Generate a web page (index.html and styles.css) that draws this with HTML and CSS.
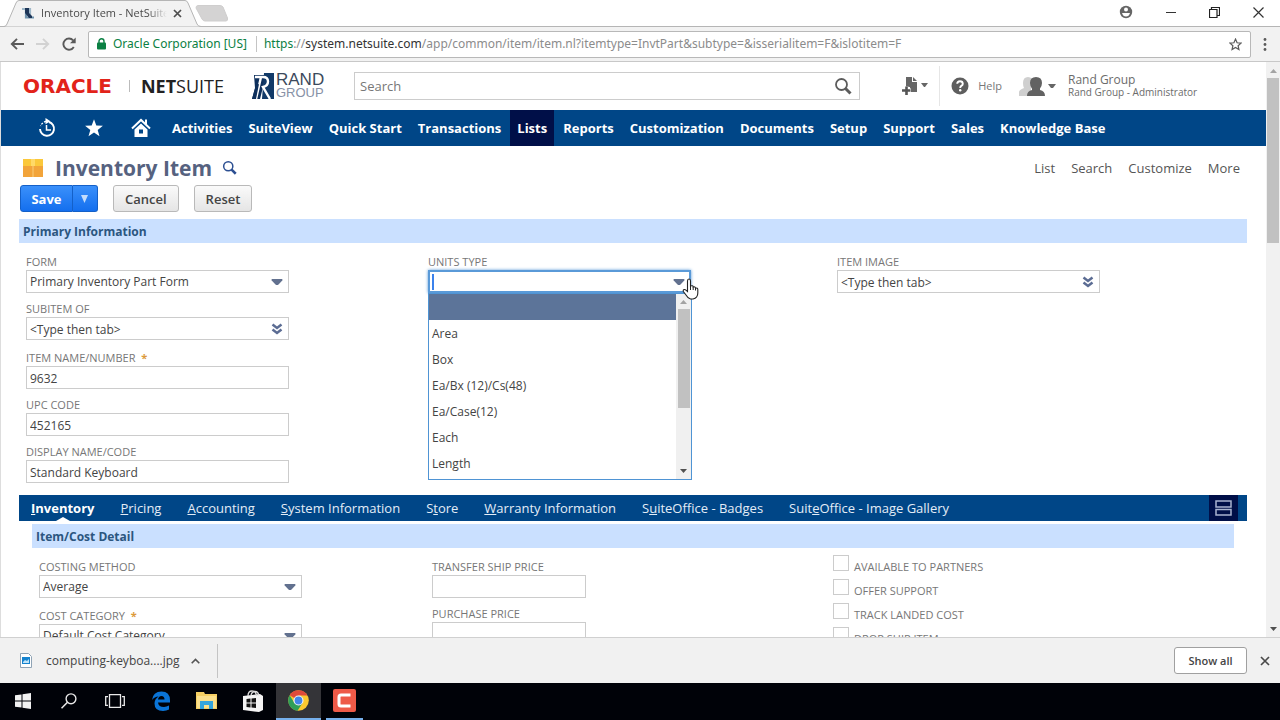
FILE: index.html
```html
<!DOCTYPE html>
<html lang="en">
<head>
<meta charset="utf-8">
<title>Inventory Item - NetSuite</title>
<link rel="stylesheet" href="styles.css">
</head>
<body>
<svg class="defs" aria-hidden="true">
  <symbol id="caret" viewBox="0 0 12 8"><path d="M1 1h10a1 1 0 0 1 .3 1.400L7 7H5L.7 2.400A1 1 0 0 1 1 1z" fill="#62718f"/></symbol>
  <symbol id="chevrons" viewBox="0 0 12 12"><path d="M1.500 1.500L6 5l4.500-3.500M1.500 6.500L6 10l4.500-3.500" fill="none" stroke="#5b6c93" stroke-width="2.500"/></symbol>
  <symbol id="lens" viewBox="0 0 18 18"><circle cx="7.500" cy="7.500" r="5.500" fill="none" stroke="currentColor" stroke-width="1.800"/><path d="M11.500 11.500l5 5" stroke="currentColor" stroke-width="3"/></symbol>
</svg>

<header class="tabstrip">
  <svg class="tab-shape" width="202" height="27" viewBox="0 0 202 27"><path d="M0 26.500H4Q6 26.500 7 24L16 3Q17 .500 19 .500H185Q187 .500 188 3L197 24Q198 26.500 201 26.500" fill="#f2f2f2" stroke="#b5b5b5"/></svg>
  <div class="tab">
    <svg width="14" height="12" viewBox="0 0 14 12"><path d="M1 2h8v8" fill="none" stroke="#9fb8c9" stroke-width="2.200"/><path d="M5 3v7.500h8" fill="none" stroke="#6f93ad" stroke-width="2.200"/><path d="M4 1h4v5l3 3v2H8L4 6z" fill="#1d3557"/></svg>
    <span class="tab-title">Inventory Item - NetSuite</span>
    <button class="plain" aria-label="Close tab"><svg width="9" height="9" viewBox="0 0 9 9"><path d="M1 1l7 7M8 1L1 8" stroke="#4d4d4d" stroke-width="1.700"/></svg></button>
  </div>
  <svg class="newtab" width="34" height="17" viewBox="0 0 34 17"><path d="M3 .500H25Q27 .500 28 2L32.500 13Q33 16 31 16H10Q8 16 7 14L1 3Q1 .500 3 .500z" fill="#d4d3d3" stroke="#cfcece"/></svg>
  <div class="win">
    <svg width="14" height="14" viewBox="0 0 14 14"><circle cx="7" cy="7" r="6.200" fill="#666"/><circle cx="7" cy="4.500" r="2" fill="#fff"/><path d="M3 8h8q-1 3.500-4 3.500T3 8z" fill="#fff"/></svg>
    <svg width="10" height="10" viewBox="0 0 10 10"><path d="M0 5.500h10" stroke="#333"/></svg>
    <svg width="11" height="11" viewBox="0 0 11 11"><path d="M.500 2.500h7.500v8H.500zM2.500 2.500v-2h8v8H8" fill="none" stroke="#222" stroke-width="1.200"/></svg>
    <svg width="11" height="11" viewBox="0 0 11 11"><path d="M.500 .500l10 10M10.500 .500l-10 10" stroke="#333" stroke-width="1.200"/></svg>
  </div>
</header>

<div class="toolbar">
  <svg width="14" height="12" viewBox="0 0 14 12"><path d="M14 6H2M7 .800L1.800 6 7 11.200" fill="none" stroke="#5a5a5a" stroke-width="1.900"/></svg>
  <svg width="14" height="12" viewBox="0 0 14 12"><path d="M0 6h12M7 .800L12.200 6 7 11.200" fill="none" stroke="#d2d2d2" stroke-width="1.900"/></svg>
  <svg width="14" height="14" viewBox="0 0 14 14"><path d="M11.800 10A5.600 5.600 0 1 1 11.200 3.400" fill="none" stroke="#5a5a5a" stroke-width="1.900"/><path d="M13.700 .500v5.700H8z" fill="#5a5a5a"/></svg>
  <div class="omnibox">
    <svg width="9" height="12" viewBox="0 0 9 12"><rect y="4.500" width="9" height="7" rx="1" fill="#0b8043"/><path d="M2 5V3.200a2.500 2.500 0 0 1 5 0V5" fill="none" stroke="#0b8043" stroke-width="1.400"/></svg>
    <span class="cert">Oracle Corporation [US]</span>
    <span class="url"><span class="scheme">https</span>://<b>system.netsuite.com</b>/app/common/item/item.nl?itemtype=InvtPart&amp;subtype=&amp;isserialitem=F&amp;islotitem=F</span>
    <svg width="13" height="13" viewBox="0 0 14 14"><path d="M7 1.200l1.700 3.900 4.300.400-3.200 2.800.900 4.200L7 10.300l-3.700 2.200.900-4.200L1 5.500l4.300-.400z" fill="none" stroke="#5a5a5a" stroke-width="1.300"/></svg>
  </div>
  <svg width="4" height="13" viewBox="0 0 4 13"><g fill="#5a5a5a"><circle cx="2" cy="1.500" r="1.400"/><circle cx="2" cy="6.500" r="1.400"/><circle cx="2" cy="11.500" r="1.400"/></g></svg>
</div>

<div class="viewport">
<main class="page">
  <div class="brandbar">
    <div class="oracle"><span class="oracle-name">ORACLE</span><span class="oracle-suite"><b>NET</b>SUITE</span></div>
    <div class="rand">
      <svg width="22" height="26" viewBox="0 0 22 26"><path d="M2 2h10v8L8 26H0l3-11z" fill="#0d2f5c"/><path d="M12 0h10v26H10z" fill="#123a68"/><path d="M3 4h8q5 0 5 4.500T11 14l7 12M9 4L4 26" fill="none" stroke="#fff" stroke-width="2.400"/><path d="M0 26L4 12l3-1-3 15z" fill="#0d2f5c"/></svg>
      <div class="rand-text"><span>RAND</span><span class="grp">GROUP</span></div>
    </div>
    <label class="search"><input type="text" placeholder="Search" aria-label="Search"><svg width="18" height="18"><use href="#lens"/></svg></label>
    <button class="plain create" aria-label="Create new"><svg width="26" height="19" viewBox="0 0 26 19"><path d="M4 0h6v5h5v10H8v-5H4z" fill="#666"/><path d="M11 0l4 4h-4z" fill="#666"/><path d="M0 13.500h9M4.500 9.500v8.500" stroke="#fff" stroke-width="4"/><path d="M0 13.500h8.500M4.500 9.500v8.500" stroke="#555" stroke-width="2.600"/><path d="M19 6h7l-3 4h-1z" fill="#666"/></svg></button>
    <a class="help" href="#"><svg width="18" height="18" viewBox="0 0 18 18"><circle cx="9" cy="9" r="8.500" fill="#5e5e5e"/><path d="M6.200 6.800Q6.300 4.200 9 4.200t2.800 2.500Q11.800 8 10.300 8.900 9.200 9.600 9.200 11" fill="none" stroke="#fff" stroke-width="1.900"/><circle cx="9.200" cy="13.300" r="1.200" fill="#fff"/></svg>Help</a>
    <button class="plain user"><svg width="37" height="21" viewBox="0 0 37 21"><path d="M9 1q5 0 5 6 0 4-2 6v3H0q0-2 5-4-1-2-1-5 0-6 5-6zM0 16h12v4H0z" fill="#cfcfcf"/><path d="M17 1q6 0 6 6 0 3-2 5.500v1.500q5 1 5 6H8q0-5 5-6v-1.500Q11 10 11 7q0-6 6-6z" fill="#626262"/><path d="M29 8h8l-3 4h-2z" fill="#666"/></svg><span class="who"><span>Rand Group</span><span class="role">Rand Group - Administrator</span></span></button>
  </div>

  <nav class="mainnav">
    <a href="#" class="ic" aria-label="Recent"><svg width="20" height="20" viewBox="0 0 20 20"><path d="M12 4A7 7 0 1 1 3 11" fill="none" stroke="#fff" stroke-width="1.900"/><path d="M9 3.400Q5 4.500 3.500 8" fill="none" stroke="#fff" stroke-width="1.300" stroke-dasharray="2 1.500"/><path d="M8.500 0l5 3.300-5 3z" fill="#fff"/><path d="M9.500 7v5H14" fill="none" stroke="#fff" stroke-width="1.500"/></svg></a>
    <a href="#" class="ic" aria-label="Shortcuts"><svg width="20" height="20" viewBox="0 0 20 20"><path d="M10 1.300l2.300 6.200 6.600.300-5.200 4.100 1.800 6.400-5.500-3.700-5.500 3.700 1.800-6.400L1.100 7.800l6.600-.300z" fill="#fff"/></svg></a>
    <a href="#" class="ic" aria-label="Home"><svg width="20" height="20" viewBox="0 0 20 20"><path d="M1 10.500L10 2l9 8.500M15 1.500V6" fill="none" stroke="#fff" stroke-width="2"/><path d="M10 5.500l6.500 6V19h-13v-7.500zM8 11.500v4h4v-4z" fill="#fff" fill-rule="evenodd"/></svg></a>
    <a href="#">Activities</a><a href="#">SuiteView</a><a href="#">Quick Start</a><a href="#">Transactions</a><a href="#" class="on">Lists</a><a href="#">Reports</a><a href="#">Customization</a><a href="#">Documents</a><a href="#">Setup</a><a href="#">Support</a><a href="#">Sales</a><a href="#">Knowledge Base</a>
  </nav>

  <div class="content">
    <div class="titlerow">
      <svg width="20" height="20" viewBox="0 0 20 20"><path d="M0 1h20v8H0z" fill="#fbc83b"/><path d="M0 8h20v11H0z" fill="#f2a43a"/><path d="M8 1h4v7H8z" fill="#ffd968"/><path d="M9 8h2v11H9z" fill="#f6b95a"/></svg>
      <h1>Inventory Item</h1>
      <svg class="title-lens" width="15" height="15"><use href="#lens" width="15" height="15"/></svg>
      <div class="links"><a href="#">List</a><a href="#">Search</a><a href="#">Customize</a><a href="#">More</a></div>
    </div>
    <div class="buttons">
      <div class="split"><button class="save">Save</button><button class="drop" aria-label="Save options"><svg width="9" height="8" viewBox="0 0 9 8"><path d="M1 0h7L4.500 8z" fill="#c3dcfc"/></svg></button></div>
      <button class="btn">Cancel</button>
      <button class="btn">Reset</button>
    </div>

    <h2 class="section">Primary Information</h2>
    <div class="fields primary">
      <div class="col">
        <div class="field"><label for="form">FORM</label><div class="box"><select id="form"><option>Primary Inventory Part Form</option></select><svg width="12" height="8"><use href="#caret"/></svg></div></div>
        <div class="field"><label for="sub">SUBITEM OF</label><div class="box"><input id="sub" type="text" value="&lt;Type then tab&gt;"><svg width="12" height="12"><use href="#chevrons"/></svg></div></div>
        <div class="field required"><label for="name">ITEM NAME/NUMBER <i>*</i></label><div class="box"><input id="name" type="text" value="9632"></div></div>
        <div class="field"><label for="upc">UPC CODE</label><div class="box"><input id="upc" type="text" value="452165"></div></div>
        <div class="field"><label for="disp">DISPLAY NAME/CODE</label><div class="box"><input id="disp" type="text" value="Standard Keyboard"></div></div>
      </div>
      <div class="col">
        <div class="field"><label for="units">UNITS TYPE</label><div class="box open"><input id="units" type="text" role="combobox" aria-expanded="true" aria-controls="unitlist"><svg width="12" height="8"><use href="#caret"/></svg>
          <div class="menu">
            <ul id="unitlist" role="listbox"><li role="option" class="sel" aria-selected="true"></li><li role="option">Area</li><li role="option">Box</li><li role="option">Ea/Bx (12)/Cs(48)</li><li role="option">Ea/Case(12)</li><li role="option">Each</li><li role="option">Length</li></ul>
            <div class="mbar"><svg width="7" height="4" viewBox="0 0 7 4"><path d="M0 4h7L3.500 0z" fill="#a3a3a3"/></svg><div class="mthumb"></div><svg class="dn" width="7" height="4" viewBox="0 0 7 4"><path d="M0 0h7L3.500 4z" fill="#505050"/></svg></div>
          </div>
          <svg class="hand" width="17" height="22" viewBox="0 0 17 22"><path d="M5.500 13.500V3q0-2 1.500-2t1.500 2v5q2.500-.800 2.700 1 2-.700 2.300 1 2.300-.300 2.300 1.500v3.500q0 5-4.800 6H8.500Q6 20.500 4 17L1.300 13.500q-.500-1.500.700-2 1-.300 2 .700z" fill="#fff" stroke="#222" stroke-width="1.100"/><path d="M8.500 8v4M11.200 9v3M13.500 10v2.500" stroke="#222"/></svg>
        </div></div>
      </div>
      <div class="col">
        <div class="field"><label for="img">ITEM IMAGE</label><div class="box"><input id="img" type="text" value="&lt;Type then tab&gt;"><svg width="12" height="12"><use href="#chevrons"/></svg></div></div>
      </div>
    </div>

    <div class="subtabs">
      <a href="#" class="on"><u>I</u>nventory</a><a href="#"><u>P</u>ricing</a><a href="#"><u>A</u>ccounting</a><a href="#"><u>S</u>ystem Information</a><a href="#">S<u>t</u>ore</a><a href="#"><u>W</u>arranty Information</a><a href="#">S<u>u</u>iteOffice - Badges</a><a href="#">Suit<u>e</u>Office - Image Gallery</a>
      <button class="layout" aria-label="Unlayer tabs"><svg width="17" height="16" viewBox="0 0 17 16"><path d="M1 1h15v6H1zM1 9.500h15v5.500H1z" fill="none" stroke="#a9b4d0" stroke-width="1.500"/></svg></button>
    </div>
    <div class="subpage">
      <h2 class="section">Item/Cost Detail</h2>
      <div class="fields detail">
        <div class="col">
          <div class="field"><label for="cm">COSTING METHOD</label><div class="box"><select id="cm"><option>Average</option></select><svg width="12" height="8"><use href="#caret"/></svg></div></div>
          <div class="field required"><label for="cc">COST CATEGORY <i>*</i></label><div class="box"><select id="cc"><option>Default Cost Category</option></select><svg width="12" height="8"><use href="#caret"/></svg></div></div>
        </div>
        <div class="col narrow">
          <div class="field"><label for="tsp">TRANSFER SHIP PRICE</label><div class="box"><input id="tsp" type="text"></div></div>
          <div class="field"><label for="pp">PURCHASE PRICE</label><div class="box"><input id="pp" type="text"></div></div>
        </div>
        <div class="checks">
          <label><input type="checkbox"><span>AVAILABLE TO PARTNERS</span></label>
          <label><input type="checkbox"><span>OFFER SUPPORT</span></label>
          <label><input type="checkbox"><span>TRACK LANDED COST</span></label>
          <label><input type="checkbox"><span>DROP SHIP ITEM</span></label>
        </div>
      </div>
    </div>
  </div>
</main>
<div class="scroll"><svg width="7" height="4" viewBox="0 0 7 4"><path d="M0 4h7L3.500 0z" fill="#a3a3a3"/></svg><div class="thumb"></div><svg class="dn" width="7" height="4" viewBox="0 0 7 4"><path d="M0 0h7L3.500 4z" fill="#505050"/></svg></div>
</div>

<div class="downloads">
  <svg width="12" height="15" viewBox="0 0 12 15"><path d="M.500 .500h8l3 3v11H.500z" fill="#fff" stroke="#8fa3b5"/><path d="M2 4h8v7H2z" fill="#1583cf"/><path d="M3 9l2-2 2 1 2-2v4H3z" fill="#bfe3f8"/></svg>
  <span class="file">computing-keyboa....jpg</span>
  <svg width="9" height="6" viewBox="0 0 9 6"><path d="M.700 5.300L4.500 1.500l3.800 3.800" fill="none" stroke="#555" stroke-width="1.600"/></svg>
  <span class="rule"></span>
  <button class="showall">Show all</button>
  <button class="plain" aria-label="Close downloads"><svg width="10" height="10" viewBox="0 0 10 10"><path d="M1 1l8 8M9 1L1 9" stroke="#4a4a4a" stroke-width="1.700"/></svg></button>
</div>

<footer class="taskbar">
  <button aria-label="Start"><svg width="16" height="16" viewBox="0 0 16 16"><path d="M0 2.300l6.500-.900v6.100H0zM7.500 1.200L16 0v7.500H7.500zM0 8.500h6.500v6.100L0 13.700zM7.500 8.500H16V16l-8.500-1.200z" fill="#f2f2f2"/></svg></button>
  <button aria-label="Search"><svg width="16" height="16" viewBox="0 0 16 16"><circle cx="10" cy="5.800" r="4.900" fill="none" stroke="#e8e8e8" stroke-width="1.400"/><path d="M6.500 9.300L.500 15.300" stroke="#e8e8e8" stroke-width="1.600"/></svg></button>
  <button aria-label="Task view"><svg width="20" height="14" viewBox="0 0 20 14"><path d="M4.500 .700h11v12.600h-11zM3 2.700H.700v8.600H3M17 2.700h2.300v8.600H17" fill="none" stroke="#e8e8e8" stroke-width="1.300"/></svg></button>
  <button aria-label="Edge"><svg width="20" height="20" viewBox="0 0 20 20"><path d="M1 9Q2 .500 10.500 .500 19 .500 19 9.500v2H7q.500 4.500 6 4.500 2.500 0 5-1.400v4Q15.500 20 12 20q-8.500 0-8.500-7.500Q3.500 8 7.500 5.500 3.500 5.700 1 9zM7 8.500h6.500Q13.500 5 10.500 5 7.500 5 7 8.500z" fill="#0a74d6" fill-rule="evenodd"/></svg></button>
  <button aria-label="File Explorer"><svg width="21" height="18" viewBox="0 0 21 18"><path d="M0 0h8l1 2h12v15H0z" fill="#f5cf63"/><path d="M1 4h19v12H1z" fill="#fbe08c"/><path d="M4 17V9h13v8h-4v-4H8v4z" fill="#35a5dc"/></svg></button>
  <button aria-label="Store"><svg width="20" height="22" viewBox="0 0 20 22"><path d="M0 6l17-2 3 2v14l-4 2L0 20z" fill="#f4f4f4"/><path d="M5 6Q5 1 9 1t4.500 5M8 5q1-3.500 4-3.500 3.500 0 3.500 4" fill="none" stroke="#ddd" stroke-width="1.300"/><path d="M3.500 9l4-.500v4h-4zM8.500 8.500L13 8v4.500H8.500zM3.500 13.500h4v4l-4-.500zM8.500 13.500H13V18l-4.500-.500z" fill="#111"/></svg></button>
  <button class="active" aria-label="Chrome"><svg width="21" height="21" viewBox="0 0 21 21"><circle cx="10.500" cy="10.500" r="10.300" fill="#fbc82f"/><path d="M10.500 10.500L1.600 5.300A10.300 10.300 0 0 1 19.500 5.500H10.500z" fill="#df4a3b"/><path d="M1.600 5.300A10.300 10.300 0 0 0 9.500 20.750L14.500 13 10.500 10.500 6.500 13z" fill="#2f9e58"/><circle cx="10.500" cy="10.500" r="5" fill="#f4f4f4"/><circle cx="10.500" cy="10.500" r="3.900" fill="#4285e8"/></svg></button>
  <button class="running" aria-label="Camtasia"><svg width="23" height="23" viewBox="0 0 23 23"><rect width="23" height="23" rx="2" fill="#ee5a48"/><path d="M17.500 6H8Q6 6 6 8v7q0 2 2 2h9.500" fill="none" stroke="#fff" stroke-width="3"/></svg></button>
</footer>
</body>
</html>
```
FILE: styles.css
```css
* { box-sizing: border-box; }
body { margin: 0; height: 100vh; display: flex; flex-direction: column; overflow: hidden; background: #fff; color: #555; font: 13px/18px "Open Sans", "Noto Sans", sans-serif; }
a { color: inherit; text-decoration: none; }
button, input, select { font: inherit; color: inherit; margin: 0; }
svg { flex: none; display: block; }
.defs { position: absolute; width: 0; height: 0; }
.plain { background: none; border: 0; padding: 0; display: flex; align-items: center; text-align: left; }

/* browser chrome */
.tabstrip { position: relative; flex: none; height: 27px; display: flex; align-items: center; border-bottom: 1px solid #b5b5b5; }
.tab-shape { position: absolute; left: 0; top: 0; }
.tab { position: relative; width: 182px; padding-left: 21px; display: flex; align-items: center; gap: 6px; font-size: 11px; color: #4a4a4a; }
.tab-title { flex: 1; overflow: hidden; white-space: nowrap; -webkit-mask-image: linear-gradient(90deg, #000 85%, transparent); mask-image: linear-gradient(90deg, #000 85%, transparent); }
.newtab { margin-left: 13px; }
.win { margin-left: auto; padding: 0 16px 2px 0; display: flex; align-items: center; gap: 33px; }
.toolbar { flex: none; height: 35px; display: flex; align-items: center; gap: 12px; padding: 0 13px 0 10px; background: #f2f2f2; border-bottom: 1px solid #c8c8c8; }
.omnibox { flex: 1; min-width: 0; height: 27px; display: flex; align-items: center; padding: 0 8px 0 8px; background: #fff; border: 1px solid #b8b8b8; border-radius: 2px; font: 12px/18px "Noto Sans", sans-serif; white-space: nowrap; }
.cert { margin-left: 7px; padding-right: 9px; border-right: 1px solid #c4c4c4; color: #0b8043; line-height: 16px; }
.url { flex: 1; padding-left: 7px; overflow: hidden; color: #8c8c8c; }
.url b { font-weight: 400; color: #333; }
.scheme { color: #0b8043; }

/* page frame */
.viewport { flex: 1; min-height: 0; display: flex; }
.page { flex: 1; min-width: 0; overflow: hidden; border-left: 1px solid #ddd; }
.scroll { width: 14px; display: flex; flex-direction: column; align-items: center; gap: 5px; padding: 7px 0 6px; background: #f1f1f1; }
.thumb { width: 12px; height: 165px; background: #c1c1c1; }
.dn { margin-top: auto; }

.brandbar { height: 48px; display: flex; align-items: center; padding: 0 24px 0 22px; }
.oracle { width: 201px; display: flex; align-items: center; color: #222; }
.oracle-name { width: 107px; font: bold 20px/12px "DejaVu Sans", sans-serif; color: #e2231a; border-right: 1px solid #bbb; }
.oracle-suite { padding-left: 11px; font-size: 18px; }
.rand { margin-left: 28px; display: flex; gap: 2px; }
.rand-text { width: 50px; display: flex; flex-direction: column; font: 17px/14px "Liberation Sans", sans-serif; color: #3c4a5c; }
.grp { font-size: 13px; line-height: 12px; color: #8791a6; }
.search { flex: 1; margin-left: 28px; height: 28px; display: flex; align-items: center; padding: 0 7px 0 5px; border: 1px solid #ccc; color: #5c5c5c; }
.search input { flex: 1; min-width: 0; border: 0; padding: 0; outline: 0; background: none; font-size: 13px; }
.search input::placeholder { color: #777; opacity: 1; }
.create { margin-left: 42px; height: 40px; width: 38px; border-right: 1px solid #e6e6e6; }
.help { margin-left: 11px; display: flex; align-items: center; gap: 9px; font-size: 11px; color: #777; }
.user { margin-left: 17px; gap: 12px; color: #6b6b6b; }
.who { width: 174px; display: flex; flex-direction: column; font-size: 12px; line-height: 12px; }
.role { font-size: 10px; }

.mainnav { height: 36px; display: flex; gap: 2px; padding-left: 23px; background: #004687; color: #fff; font-weight: 700; white-space: nowrap; }
.mainnav a { display: flex; align-items: center; padding: 0 7px; }
.mainnav .ic { width: 45px; justify-content: center; }
.mainnav .on { background: #000f48; }

/* record */
.content { padding: 7px 19px 0 18px; }
.titlerow { display: flex; align-items: center; height: 29px; padding: 0 7px 0 4px; }
h1 { margin: 0 0 0 12px; font-size: 21px; line-height: 28px; font-weight: 700; color: #56627f; }
.title-lens { margin-left: 10px; color: #2c4f92; }
.links { margin-left: auto; display: flex; gap: 16px; padding-top: 1px; color: #555; }
.buttons { display: flex; gap: 15px; margin: 3px 0 7px 1px; }
.btn, .save, .drop { height: 27px; border-radius: 3px; border: 1px solid #b9b9b9; font-weight: 600; }
.btn { padding: 0 11px; background: linear-gradient(#fafafa, #e5e5e5); color: #444; }
.split { display: flex; }
.save, .drop { color: #fff; background: linear-gradient(#3a90fb, #146fee); border-color: #1460c8; }
.save { width: 53px; padding: 0; border-radius: 3px 0 0 3px; font-weight: 700; }
.drop { width: 25px; padding: 0 7px; border-left: 0; border-radius: 0 3px 3px 0; }
.section { margin: 0; height: 24px; padding-left: 4px; background: #cae0ff; color: #2c5680; font-size: 12px; line-height: 25px; font-weight: 700; }
.fields { display: grid; padding-left: 7px; }
.primary { grid-template-columns: 402fr 409fr 410fr; padding-top: 11px; padding-bottom: 12px; }
.detail { grid-template-columns: 393fr 401fr 401fr; padding-top: 11px; }
.col { display: flex; flex-direction: column; gap: 8px; }
.field label { display: block; font-size: 11px; line-height: 16px; color: #777; }
.field.required { padding-top: 2px; }
.field label i { margin-left: 3px; font-style: normal; font-weight: 700; color: #dc9a3c; }
.box { position: relative; width: 263px; height: 23px; }
.narrow .box { width: 154px; }
.box > input, .box > select { width: 100%; height: 23px; display: block; padding: 1px 3px 0; border: 1px solid #ccc; border-radius: 0; background: #fff; color: #444; font-size: 12px; outline: 0; appearance: none; }
.box > svg { position: absolute; right: 6px; top: 50%; translate: 0 -50%; }
.box.open > input { border: 2px solid #5a9ad8; box-shadow: 0 0 3px #5a9ad8; background: linear-gradient(#3b82ec, #3b82ec) 2px 50% / 2px 16px no-repeat #fff; }
.menu { position: absolute; z-index: 2; left: 0; top: 23px; width: 264px; height: 187px; display: flex; border: 1px solid #4f94d4; background: #fff; }
.menu ul { flex: 1; margin: 0; padding: 0; list-style: none; overflow: hidden; color: #444; font-size: 12px; }
.menu li { height: 26px; padding: 0 3px; line-height: 27px; }
.menu .sel { background: #5c7499; }
.mbar { width: 15px; display: flex; flex-direction: column; align-items: center; gap: 5px; padding: 6px 0 6px; background: #f0f0f0; }
.mthumb { width: 12px; height: 99px; background: #c1c1c1; }
.box > .hand { right: -8px; top: 19px; z-index: 3; }

.subtabs { height: 26px; display: flex; gap: 26px; padding: 0 9px 0 12px; background: #004687; color: #e4edf7; white-space: nowrap; line-height: 26px; }
.subtabs a { position: relative; }
.subtabs .on { color: #fff; font-weight: 700; }
.subtabs .on::after { content: ""; position: absolute; left: 50%; bottom: 0; margin-left: -7px; border: 7px solid transparent; border-top: 0; border-bottom: 4px solid #fff; }
.layout { margin-left: auto; width: 29px; padding: 0 6px; border: 0; background: #000f48; }
.subpage { padding: 3px 13px 0; }
.checks { margin-top: -4px; }
.checks label { display: flex; gap: 5px; height: 24px; font-size: 11px; line-height: 24px; color: #777; }
.checks input { appearance: none; width: 16px; height: 16px; border: 1px solid #ccc; background: #fff; }

.downloads { flex: none; height: 46px; display: flex; align-items: center; padding: 0 10px 0 20px; background: #f1f1f1; border-top: 1px solid #d0d0d0; color: #444; font-size: 12px; }
.file { margin: 0 11px 0 14px; }
.rule { height: 34px; margin-left: 17px; border-left: 1px solid #c4c4c4; }
.showall { height: 27px; width: 73px; margin: 0 13px 0 auto; padding: 0; background: #fff; border: 1px solid #a0a0a0; border-radius: 3px; font-size: 11px; font-weight: 600; color: #444; }
.taskbar { flex: none; height: 37px; display: flex; gap: 1px; background: #000208; }
.taskbar button { width: 45px; padding: 0; border: 0; border-bottom: 2px solid transparent; background: none; display: flex; align-items: center; justify-content: center; }
.taskbar .active { background: #343438; border-bottom-color: #76b0ec; }
.taskbar .running { width: 37px; margin-left: 4px; border-bottom-color: #76b0ec; }
```
